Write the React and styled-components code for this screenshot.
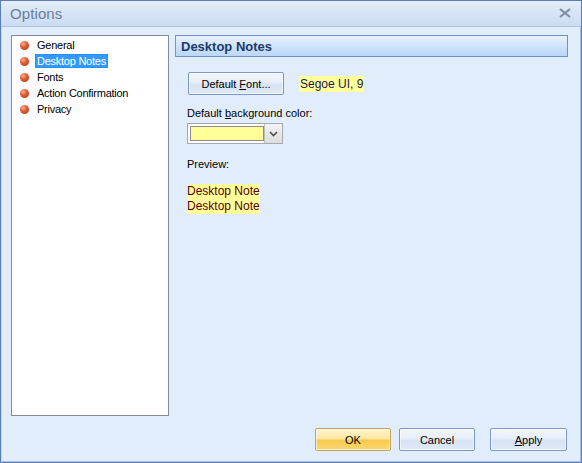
import React from 'react'
import styled, { createGlobalStyle } from 'styled-components'

const Global = createGlobalStyle`
  html, body { margin: 0; padding: 0; }
  body { font-family: "Liberation Sans", Arial, sans-serif; font-size: 11px; }
`

const Window = styled.div`
  width: 582px;
  height: 463px;
  box-sizing: border-box;
  border: 1px solid #5a7fb6;
  box-shadow: inset 1px 1px 0 #c3d6f0, inset -1px -1px 0 #a9c2e4;
  background: #e2edfc;
  display: flex;
  flex-direction: column;
  font-family: "Liberation Sans", Arial, sans-serif;
  font-size: 11px;
  color: #000;
`

const TitleBar = styled.div`
  height: 25px;
  flex: none;
  display: flex;
  align-items: center;
  justify-content: space-between;
  padding: 0 10px 0 9px;
  background: linear-gradient(#e4edf9, #d6e4f6 50%, #cadcf3);
  border-bottom: 1px solid #a6c5ea;
`

const Title = styled.span`
  font-size: 15px;
  color: #6c7d96;
  letter-spacing: 0.1px;
`

const Close = styled.svg`
  width: 12px;
  height: 10px;
  margin-top: -2px;
`

const Body = styled.div`
  flex: 1;
  display: flex;
  gap: 6px;
  padding: 8px 13px 0 10px;
`

const Nav = styled.ul`
  list-style: none;
  margin: 0;
  padding: 1px 0 0 6px;
  width: 150px;
  height: 378px;
  background: #fff;
  border: 1px solid #858a93;
`

const NavItem = styled.li`
  display: flex;
  align-items: center;
  height: 16px;
  gap: 8px;
  letter-spacing: -0.25px;
`

const Bullet = styled.span`
  width: 9px;
  height: 9px;
  border-radius: 50%;
  flex: none;
  background: radial-gradient(circle at 35% 30%, #ffb495 0, #e0582c 45%, #a9300f 100%);
  margin-left: 2px;
`

const NavLabel = styled.span`
  padding: 1px 2px;
  margin-left: -2px;
  ${p => p.$selected && `
    background: #3399ff;
    color: #fff;
    outline: 1px dotted #b06020;
    outline-offset: -1px;
  `}
`

const Page = styled.div`
  flex: 1;
  display: flex;
  flex-direction: column;
`

const Header = styled.div`
  height: 20px;
  border: 1px solid #6c92c9;
  background: linear-gradient(#e9f2fd, #cbe1fb 60%, #bcd6f7);
  display: flex;
  align-items: center;
  padding-left: 5px;
  font-size: 13px;
  font-weight: bold;
  color: #1d3a6a;
`

const Section = styled.div`
  padding: 15px 0 0 12px;
  display: flex;
  flex-direction: column;
`

const Row = styled.div`
  display: flex;
  align-items: center;
  gap: 15px;
  padding-left: 1px;
`

const Button = styled.button`
  font-family: inherit;
  font-size: 11px;
  color: #000;
  width: ${p => p.$w || 76}px;
  height: 23px;
  border: 1px solid ${p => (p.$primary ? '#c5a25a' : '#7a98c6')};
  border-radius: 2px;
  padding: 0;
  background: ${p =>
    p.$primary
      ? 'linear-gradient(#fff4cf, #fde7a3 45%, #f8c94d 55%, #fbd874)'
      : 'linear-gradient(#f3f7fd, #e6eefa 45%, #d7e3f4 55%, #dfe9f7)'};
  box-shadow: inset 0 0 0 1px rgba(255, 255, 255, 0.6);
`

const Hilite = styled.span`
  background: #ffff99;
  font-size: 12px;
  color: #1a1a50;
  padding: 1px 1px;
`

const Label = styled.div`
  margin-top: ${p => p.$mt || 0}px;
`

const Combo = styled.div`
  margin-top: 4px;
  width: 96px;
  height: 21px;
  box-sizing: border-box;
  border: 1px solid #a4a9b2;
  background: #fff;
  display: flex;
  align-items: center;
  padding-left: 2px;
`

const Swatch = styled.div`
  width: 73px;
  height: 13px;
  background: #ffff99;
  border: 1px solid #8d8d8d;
`

const DropBtn = styled.div`
  margin-left: auto;
  width: 17px;
  height: 19px;
  border-left: 1px solid #b9bec6;
  background: linear-gradient(#f4f4f4, #dcdcdc);
  display: flex;
  align-items: center;
  justify-content: center;
`

const Preview = styled.div`
  margin-top: 14px;
  display: flex;
  flex-direction: column;
  align-items: flex-start;
`

const Note = styled.span`
  background: #ffff99;
  color: #5a0010;
  font-size: 12px;
  line-height: 15px;
`

const Footer = styled.div`
  height: 45px;
  flex: none;
  display: flex;
  justify-content: flex-end;
  align-items: flex-start;
  gap: 8px;
  padding: 11px 14px 0 0;
  box-sizing: border-box;
`

const u = ch => <span style={{ textDecoration: 'underline' }}>{ch}</span>

const items = ['General', 'Desktop Notes', 'Fonts', 'Action Confirmation', 'Privacy']

export default function App() {
  return (
    <>
      <Global />
      <Window>
        <TitleBar>
          <Title>Options</Title>
          <Close viewBox="0 0 12 10">
            <path d="M1 1 L11 9 M11 1 L1 9" stroke="#7f8da3" strokeWidth="2.2" />
          </Close>
        </TitleBar>
        <Body>
          <Nav>
            {items.map(it => (
              <NavItem key={it}>
                <Bullet />
                <NavLabel $selected={it === 'Desktop Notes'}>{it}</NavLabel>
              </NavItem>
            ))}
          </Nav>
          <Page>
            <Header>Desktop Notes</Header>
            <Section>
              <Row>
                <Button $w={96}>Default {u('F')}ont...</Button>
                <Hilite>Segoe UI, 9</Hilite>
              </Row>
              <Label $mt={12}>Default {u('b')}ackground color:</Label>
              <Combo>
                <Swatch />
                <DropBtn>
                  <svg width="9" height="6" viewBox="0 0 9 6">
                    <path d="M1 1 L4.5 4.5 L8 1" stroke="#4d4d4d" strokeWidth="1.6" fill="none" />
                  </svg>
                </DropBtn>
              </Combo>
              <Label $mt={14}>Preview:</Label>
              <Preview>
                <Note>Desktop Note</Note>
                <Note>Desktop Note</Note>
              </Preview>
            </Section>
          </Page>
        </Body>
        <Footer>
          <Button $primary>OK</Button>
          <Button>Cancel</Button>
          <Button $w={77} style={{ marginLeft: 7 }}>{u('A')}pply</Button>
        </Footer>
      </Window>
    </>
  )
}
